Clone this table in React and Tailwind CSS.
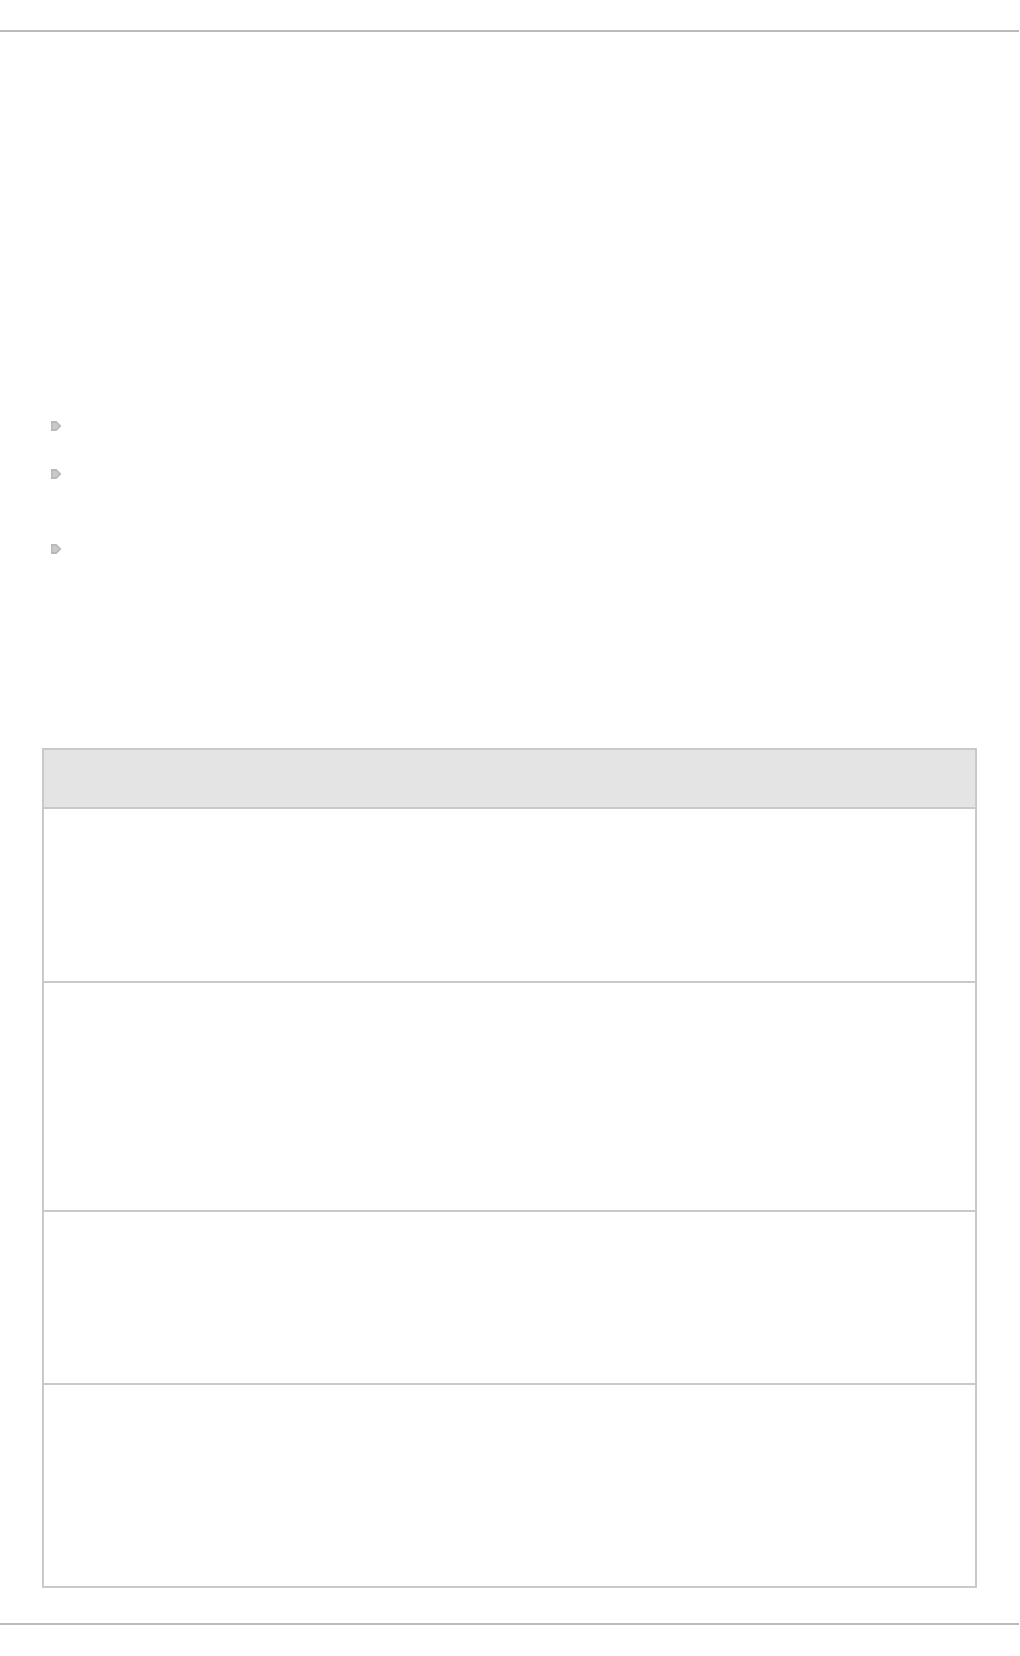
const bullets = [{ h: 'h-[48px]' }, { h: 'h-[75px]' }, { h: 'h-[204px]' }]

const rows = [
  { h: 'h-[174px]' },
  { h: 'h-[229px]' },
  { h: 'h-[173px]' },
  { h: 'h-[201px]' },
]

function Arrow() {
  return (
    <svg width="11" height="10" viewBox="0 0 11 10" className="block">
      <polygon points="0,0 5.5,0 10.5,5 5.5,10 0,10" fill="#b9b9b9" />
      <polygon points="1.5,2 5,2 8,5 5,8 1.5,8" fill="#c9c9c9" />
    </svg>
  )
}

export default function App() {
  return (
    <div className="min-h-[1656px] bg-white font-['Liberation_Sans',sans-serif] text-sm text-gray-800">
      <div className="pt-[30px]">
        <div className="h-[2px] w-[1019px] bg-[#bbbbbb]" />
      </div>

      <ul className="pl-[51px] pt-[389px]">
        {bullets.map((b, i) => (
          <li key={i} className={`${b.h} flex items-start`}>
            <Arrow />
          </li>
        ))}
      </ul>

      <div className="ml-[42px] w-[935px] border-2 border-[#c9c9c9]">
        <div className="h-[59px] border-b-2 border-[#c9c9c9] bg-[#e4e4e4]" />
        {rows.map((r, i) => (
          <div
            key={i}
            className={`${r.h} ${i < rows.length - 1 ? 'border-b-2 border-[#c9c9c9]' : ''}`}
          />
        ))}
      </div>

      <div className="pt-[35px]">
        <div className="h-[2px] w-[1019px] bg-[#bbbbbb]" />
      </div>
    </div>
  )
}
